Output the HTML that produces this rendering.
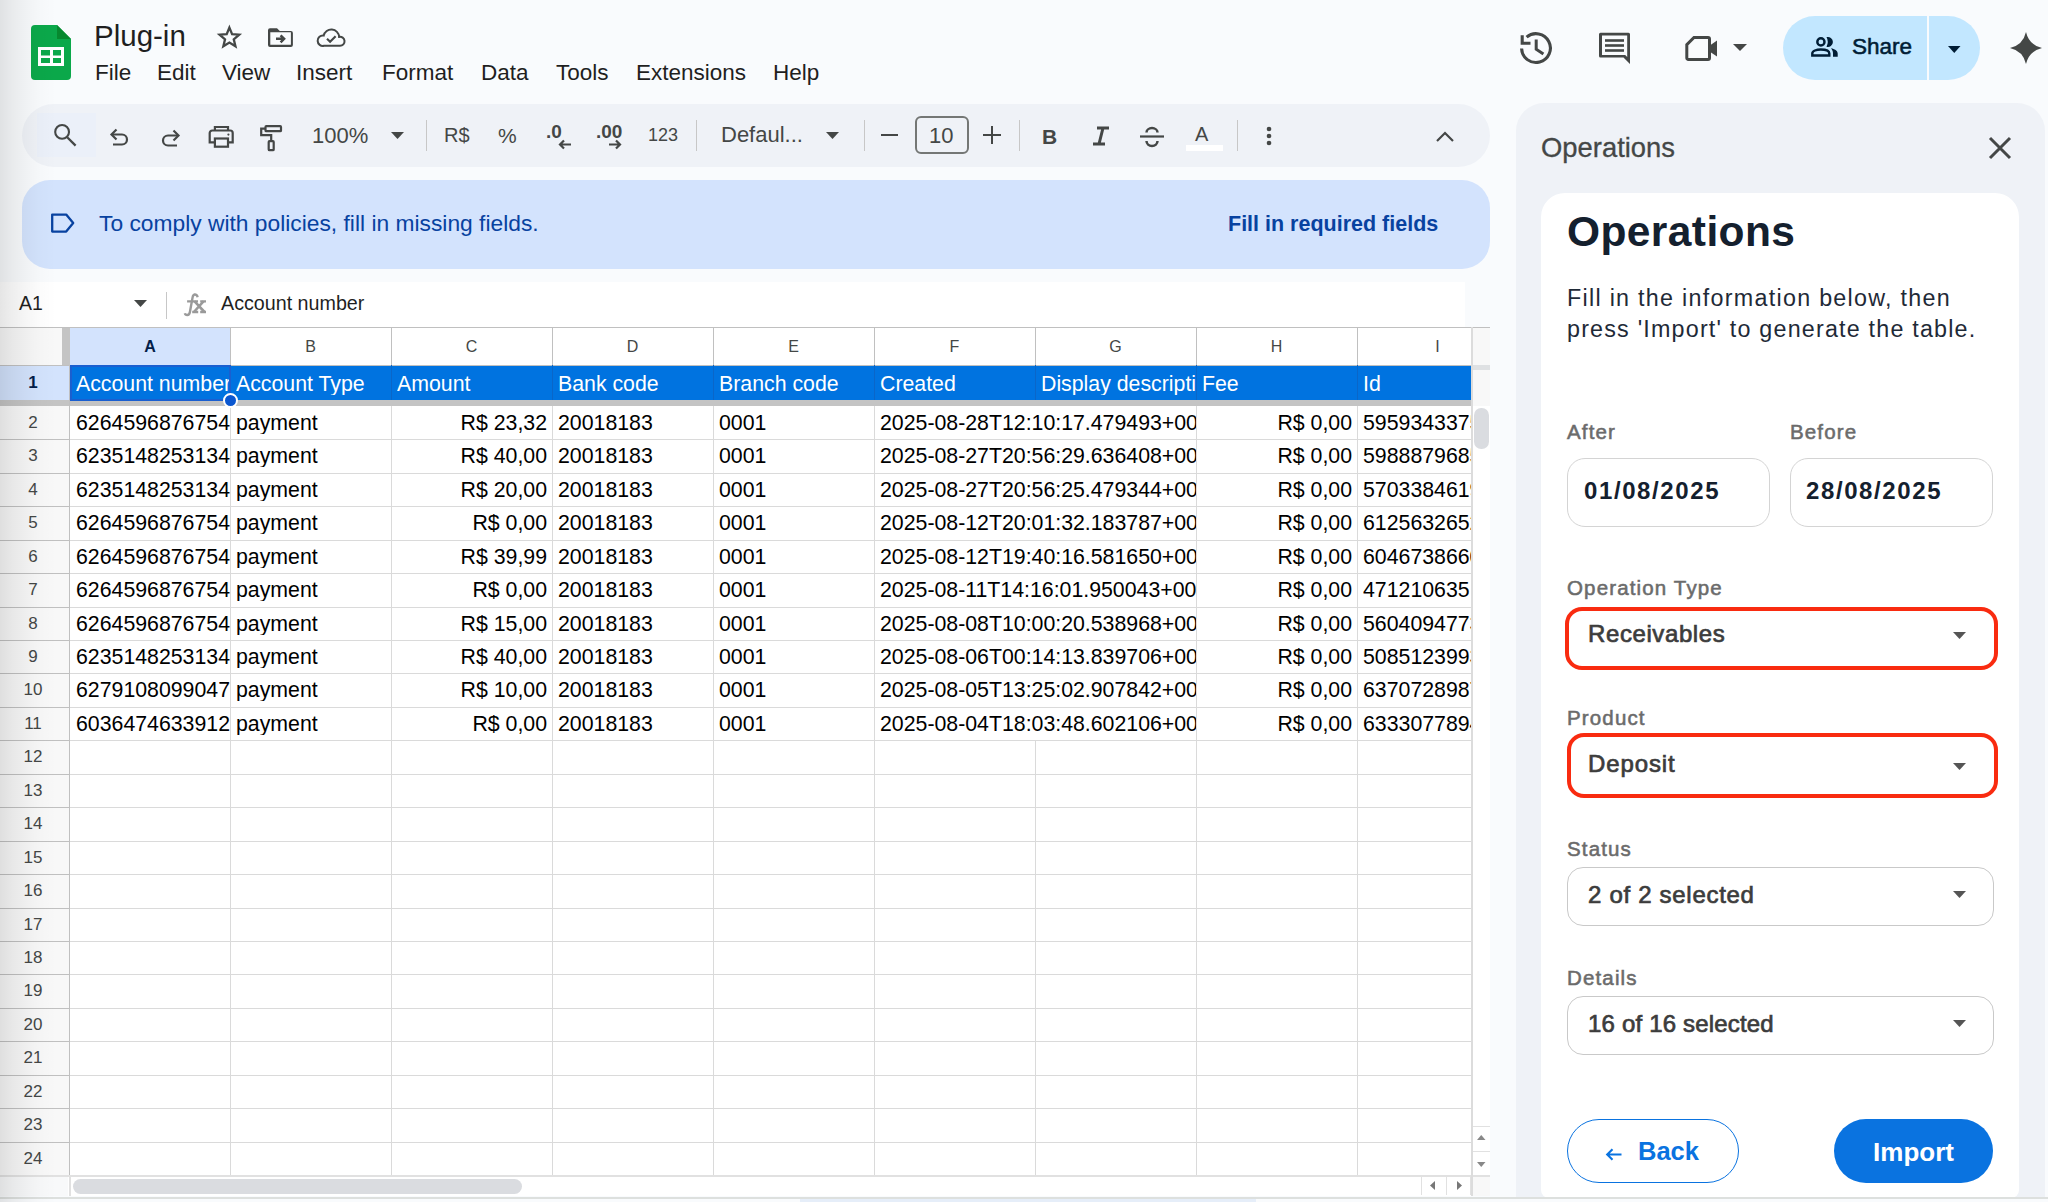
<!DOCTYPE html><html><head><meta charset="utf-8"><style>
*{box-sizing:border-box;margin:0;padding:0}
html,body{width:2048px;height:1202px;overflow:hidden;background:#f9fbfd;font-family:"Liberation Sans",sans-serif;position:relative}
.a{position:absolute}
.t{position:absolute;white-space:nowrap;line-height:1}
svg{position:absolute;overflow:visible}
</style></head><body>

<svg style="left:31px;top:25px" width="40" height="55" viewBox="0 0 40 55">
<path d="M4 0H26L40 14V51a4 4 0 0 1-4 4H4a4 4 0 0 1-4-4V4a4 4 0 0 1 4-4z" fill="#0ba84a"/>
<path d="M26 0L40 14H26z" fill="#07892f"/>
<rect x="7" y="22" width="26" height="19" fill="#fff"/>
<rect x="10" y="25" width="9" height="5.5" fill="#0ba84a"/><rect x="22" y="25" width="8" height="5.5" fill="#0ba84a"/>
<rect x="10" y="33" width="9" height="5" fill="#0ba84a"/><rect x="22" y="33" width="8" height="5" fill="#0ba84a"/>
</svg>
<div class="t" style="left:94px;top:21px;font-size:29.5px;color:#1f1f1f">Plug-in</div>
<svg style="left:217px;top:24px" width="25" height="25" viewBox="0 0 25 25"><path d="M12.40 3.60 L15.10 10.18 L22.20 10.72 L16.77 15.32 L18.45 22.23 L12.40 18.50 L6.35 22.23 L8.03 15.32 L2.60 10.72 L9.70 10.18z" fill="none" stroke="#444746" stroke-width="2.3" stroke-linejoin="miter" stroke-miterlimit="10"/></svg>
<svg style="left:267px;top:27px" width="27" height="21" viewBox="0 0 27 21"><path fill-rule="evenodd" d="M3 1.2h7l2.8 2.8h11.1a2 2 0 0 1 2 2V17.9a2 2 0 0 1-2 2H3a2 2 0 0 1-2-2V3.2a2 2 0 0 1 2-2zM3.3 5.3v12.4h20.6V5.3z" fill="#444746"/><path d="M9 11.8h7.5M13.6 8.3l3.5 3.5-3.5 3.5" fill="none" stroke="#444746" stroke-width="2.5"/></svg>
<svg style="left:316px;top:26px" width="31" height="22" viewBox="0 0 31 22"><path d="M7.7 9.6A7.8 7.8 0 0 1 23.1 10.9A4.5 4.5 0 1 1 24 19.8H8A5.2 5.2 0 1 1 7.7 9.6z" fill="none" stroke="#444746" stroke-width="2"/><path d="M11 12.7L14.1 15.8L19.6 10.2" fill="none" stroke="#444746" stroke-width="2.1"/></svg>
<div class="t" style="left:95px;top:62px;font-size:22.5px;color:#1f1f1f">File</div>
<div class="t" style="left:157px;top:62px;font-size:22.5px;color:#1f1f1f">Edit</div>
<div class="t" style="left:222px;top:62px;font-size:22.5px;color:#1f1f1f">View</div>
<div class="t" style="left:296px;top:62px;font-size:22.5px;color:#1f1f1f">Insert</div>
<div class="t" style="left:382px;top:62px;font-size:22.5px;color:#1f1f1f">Format</div>
<div class="t" style="left:481px;top:62px;font-size:22.5px;color:#1f1f1f">Data</div>
<div class="t" style="left:556px;top:62px;font-size:22.5px;color:#1f1f1f">Tools</div>
<div class="t" style="left:636px;top:62px;font-size:22.5px;color:#1f1f1f">Extensions</div>
<div class="t" style="left:773px;top:62px;font-size:22.5px;color:#1f1f1f">Help</div>
<svg style="left:1517.5px;top:29.8px" width="36" height="36" viewBox="0 0 36 36"><path d="M3.6 18.5A14.4 14.4 0 1 0 8.6 7.2" fill="none" stroke="#444746" stroke-width="3.1"/><path d="M4.2 5.2V13.3H12.5" fill="none" stroke="#444746" stroke-width="3.1"/><path d="M18.2 9.4V19.2L25.4 24" fill="none" stroke="#444746" stroke-width="3"/></svg>
<svg style="left:1597px;top:31px" width="36" height="36" viewBox="0 0 36 36"><path fill-rule="evenodd" d="M3.5 1.8h28a1.5 1.5 0 0 1 1.5 1.5V33L26.5 26.5H3.5A1.5 1.5 0 0 1 2 25V3.3a1.5 1.5 0 0 1 1.5-1.5zM5 4.6v19.3h23.2l2 2V4.6z" fill="#444746"/><rect x="8" y="8.2" width="19" height="2.6" fill="#444746"/><rect x="8" y="13.2" width="19" height="2.6" fill="#444746"/><rect x="8" y="18.2" width="19" height="2.6" fill="#444746"/></svg>
<svg style="left:1684px;top:35px" width="36" height="28" viewBox="0 0 36 28"><path d="M10 2.5H24a1.5 1.5 0 0 1 1.5 1.5V23a1.5 1.5 0 0 1-1.5 1.5H4.3a1.5 1.5 0 0 1-1.5-1.5V9.7z" fill="none" stroke="#444746" stroke-width="3"/><path d="M25.5 10.8L33 5.4V21.6L25.5 16.6z" fill="#444746"/></svg>
<svg style="left:1733px;top:44px" width="14" height="7" viewBox="0 0 14 7"><path d="M0 0h14L7 7z" fill="#444746"/></svg>
<div class="a" style="left:1783px;top:16px;width:197px;height:64px;border-radius:32px;background:#c2e7ff"></div>
<div class="a" style="left:1927px;top:16px;width:1.5px;height:64px;background:#f9fbfd"></div>
<svg style="left:1810px;top:36px" width="29" height="22" viewBox="0 0 29 22"><circle cx="10.9" cy="5.9" r="3.6" fill="none" stroke="#001d35" stroke-width="2.4"/><path d="M16.5 1.1A5 5 0 1 1 16.5 10.7A10.2 10.2 0 0 0 16.5 1.1z" fill="#001d35"/><path d="M2.3 19.5V17.5C2.3 14.8 6.5 13.5 10.8 13.5S19.3 14.8 19.3 17.5V19.5z" fill="none" stroke="#001d35" stroke-width="2.4"/><path d="M21 12.3C24.5 13 27.7 14.5 27.7 17.5V20.7H23V17.5C23 15.5 22.3 13.8 21 12.3z" fill="#001d35"/></svg>
<div class="t" style="left:1852px;top:36px;font-size:22.5px;color:#001d35;-webkit-text-stroke:0.55px #001d35">Share</div>
<svg style="left:1947.5px;top:46px" width="12.5" height="7" viewBox="0 0 12.5 7"><path d="M0 0h12.5L6.25 7z" fill="#001d35"/></svg>
<svg style="left:2009.5px;top:31.7px" width="32" height="32" viewBox="0 0 32 32"><path d="M16 0Q19 13 32 16Q19 19 16 32Q13 19 0 16Q13 13 16 0z" fill="#444746"/></svg>
<div class="a" style="left:22px;top:104px;width:1468px;height:63px;border-radius:32px;background:#eff2f7"></div>
<div class="a" style="left:37px;top:113px;width:59px;height:44px;background:#ebf0f9"></div>
<svg style="left:53px;top:123px" width="24" height="24" viewBox="0 0 24 24"><circle cx="9.1" cy="8.9" r="6.9" fill="none" stroke="#444746" stroke-width="2.1"/><path d="M14.2 14.2L22.6 22.6" stroke="#444746" stroke-width="2.3"/></svg>
<svg style="left:107px;top:126px" width="24" height="24" viewBox="0 0 24 24"><path d="M5 8.5h10a5 5 0 0 1 0 10H6" fill="none" stroke="#444746" stroke-width="2.2"/><path d="M9.5 3.5L4.5 8.5l5 5" fill="none" stroke="#444746" stroke-width="2.2"/></svg>
<svg style="left:158.5px;top:126.5px" width="24" height="24" viewBox="0 0 24 24"><path d="M19 8.5H9a5 5 0 0 0 0 10h9" fill="none" stroke="#444746" stroke-width="2.2"/><path d="M14.5 3.5l5 5-5 5" fill="none" stroke="#444746" stroke-width="2.2"/></svg>
<svg style="left:208px;top:123px" width="26" height="26" viewBox="0 0 26 26"><path d="M6.9 7.5V4H20V7.5" fill="none" stroke="#444746" stroke-width="2.2"/><path d="M6.5 19.4H1.7V10a2.5 2.5 0 0 1 2.5-2.5H22.2a2.5 2.5 0 0 1 2.5 2.5V19.4H20.4" fill="none" stroke="#444746" stroke-width="2.2"/><rect x="6.9" y="15.5" width="13.1" height="8.2" fill="none" stroke="#444746" stroke-width="2.2"/><circle cx="20.4" cy="11.6" r="1.1" fill="#444746"/></svg>
<svg style="left:259px;top:124.5px" width="24" height="28" viewBox="0 0 24 28"><rect x="6.5" y="1.2" width="15.5" height="5" rx="0.8" fill="none" stroke="#444746" stroke-width="2.2"/><path d="M6.5 3.7H2.2v6.5h10v5" fill="none" stroke="#444746" stroke-width="2.2"/><rect x="9.7" y="16.2" width="5" height="9" rx="0.8" fill="none" stroke="#444746" stroke-width="2.2"/></svg>
<div class="t" style="left:312px;top:125px;font-size:22px;color:#444746">100%</div>
<svg style="left:391px;top:132px" width="13" height="7" viewBox="0 0 13 7"><path d="M0 0h13L6.5 7z" fill="#444746"/></svg>
<div class="a" style="left:426px;top:120px;width:1px;height:31px;background:#c7c7c7"></div>
<div class="t" style="left:444px;top:125px;font-size:20px;color:#444746">R$</div>
<div class="t" style="left:498px;top:125px;font-size:21px;color:#444746">%</div>
<div class="t" style="left:546px;top:122px;font-size:19px;color:#444746;font-weight:bold">.0</div>
<svg style="left:558px;top:139px" width="14" height="11" viewBox="0 0 14 11"><path d="M13 5.5H2M6 1.5L2 5.5l4 4" fill="none" stroke="#444746" stroke-width="2.2"/></svg>
<div class="t" style="left:596px;top:122px;font-size:19px;color:#444746;font-weight:bold">.00</div>
<svg style="left:608px;top:139px" width="14" height="11" viewBox="0 0 14 11"><path d="M1 5.5h11M8 1.5l4 4-4 4" fill="none" stroke="#444746" stroke-width="2.2"/></svg>
<div class="t" style="left:648px;top:126px;font-size:18px;color:#444746">123</div>
<div class="a" style="left:696px;top:120px;width:1px;height:31px;background:#c7c7c7"></div>
<div class="t" style="left:721px;top:124px;font-size:22px;color:#444746">Defaul...</div>
<svg style="left:826px;top:132px" width="13" height="7" viewBox="0 0 13 7"><path d="M0 0h13L6.5 7z" fill="#444746"/></svg>
<div class="a" style="left:864px;top:120px;width:1px;height:31px;background:#c7c7c7"></div>
<div class="a" style="left:881px;top:134px;width:17px;height:2px;background:#444746"></div>
<div class="a" style="left:915px;top:116px;width:54px;height:38px;border:2px solid #747775;border-radius:6px"></div>
<div class="t" style="left:929px;top:125px;font-size:22px;color:#444746">10</div>
<div class="a" style="left:983px;top:134px;width:18px;height:2px;background:#444746"></div>
<div class="a" style="left:991px;top:126px;width:2px;height:18px;background:#444746"></div>
<div class="a" style="left:1019px;top:120px;width:1px;height:31px;background:#c7c7c7"></div>
<div class="t" style="left:1042px;top:126px;font-size:21px;color:#444746;font-weight:bold">B</div>
<svg style="left:1091px;top:126px" width="20" height="20" viewBox="0 0 20 20"><path d="M6 2h12M2 18h12M12 2L8 18" fill="none" stroke="#444746" stroke-width="3"/></svg>
<svg style="left:1139px;top:126px" width="26" height="22" viewBox="0 0 26 22"><path d="M1 10.5h24" stroke="#444746" stroke-width="2.2"/><path d="M7.5 6.5a5 4 0 0 1 11 0M7.5 15a5 4.5 0 0 0 11 0" fill="none" stroke="#444746" stroke-width="2.5"/></svg>
<div class="t" style="left:1195px;top:124px;font-size:20px;color:#444746">A</div>
<div class="a" style="left:1186px;top:145px;width:37px;height:6px;background:#fff"></div>
<div class="a" style="left:1237px;top:120px;width:1px;height:31px;background:#c7c7c7"></div>
<svg style="left:1265px;top:126px" width="8" height="20" viewBox="0 0 8 20"><circle cx="4" cy="3" r="2.3" fill="#444746"/><circle cx="4" cy="10" r="2.3" fill="#444746"/><circle cx="4" cy="17" r="2.3" fill="#444746"/></svg>
<svg style="left:1436px;top:131px" width="18" height="11" viewBox="0 0 18 11"><path d="M1 10l8-8 8 8" fill="none" stroke="#444746" stroke-width="2.2"/></svg>
<div class="a" style="left:22px;top:180px;width:1468px;height:89px;border-radius:28px;background:#d3e3fd"></div>
<svg style="left:50px;top:212px" width="26" height="24" viewBox="0 0 26 24"><path d="M2.2 2.6H16.2L23.2 11.1L16.2 19.6H2.2z" fill="none" stroke="#0842a0" stroke-width="2.3" stroke-linejoin="round"/></svg>
<div class="t" style="left:99px;top:212px;font-size:22.8px;color:#0842a0">To comply with policies, fill in missing fields.</div>
<div class="t" style="left:1228px;top:214px;font-size:21.5px;color:#0842a0;font-weight:bold">Fill in required fields</div>
<div class="a" style="left:0;top:282px;width:1465px;height:45px;background:#fff"></div>
<div class="t" style="left:19px;top:294px;font-size:19.5px;color:#1f1f1f">A1</div>
<svg style="left:134px;top:300px" width="13" height="7" viewBox="0 0 13 7"><path d="M0 0h13L6.5 7z" fill="#444746"/></svg>
<div class="a" style="left:166px;top:292px;width:1px;height:27px;background:#c7c7c7"></div>
<svg style="left:183px;top:293px" width="26" height="24" viewBox="0 0 26 24"><g fill="none" stroke="#9a9a9a" stroke-width="2.3"><path d="M4.1 8.4H15M17.2 8.4H23M9.2 19H15.2M17.2 19H23"/><path d="M14.6 4.2C14.3 2.2 12.8 1.3 11.6 1.5C10.4 1.7 9.9 2.8 9.6 4.4L6.9 19C6.6 20.8 5.6 22 4.3 22C3 22 2.1 21.2 1.9 20.2" stroke-width="2.4"/><path d="M11.6 8.4L21.5 19M20.5 8.4L10.9 19" stroke-width="2.6"/></g></svg>
<div class="t" style="left:221px;top:294px;font-size:19.7px;color:#1f1f1f">Account number</div>
<div class="a" style="left:0;top:327px;width:1471px;height:848px;background:#fff"></div>
<div class="a" style="left:0;top:327px;width:70px;height:848px;background:#f8f8f8"></div>
<div class="a" style="left:70px;top:327px;width:160px;height:38px;background:#d3e3fd"></div>
<div class="a" style="left:0;top:365px;width:70px;height:35px;background:#d3e3fd"></div>
<div class="a" style="left:70px;top:365px;width:1401px;height:35px;background:#0073e0"></div>
<div class="a" style="left:62px;top:327px;width:8px;height:38px;background:#c4c4c4"></div>
<div class="a" style="left:0;top:327px;width:1490px;height:1px;background:#c0c0c0"></div>
<div class="a" style="left:0;top:365px;width:1471px;height:1px;background:#c0c0c0"></div>
<div class="a" style="left:230px;top:327px;width:1px;height:38px;background:#c0c0c0"></div>
<div class="a" style="left:391px;top:327px;width:1px;height:38px;background:#c0c0c0"></div>
<div class="a" style="left:552px;top:327px;width:1px;height:38px;background:#c0c0c0"></div>
<div class="a" style="left:713px;top:327px;width:1px;height:38px;background:#c0c0c0"></div>
<div class="a" style="left:874px;top:327px;width:1px;height:38px;background:#c0c0c0"></div>
<div class="a" style="left:1035px;top:327px;width:1px;height:38px;background:#c0c0c0"></div>
<div class="a" style="left:1196px;top:327px;width:1px;height:38px;background:#c0c0c0"></div>
<div class="a" style="left:1357px;top:327px;width:1px;height:38px;background:#c0c0c0"></div>
<div class="a" style="left:1471px;top:327px;width:1px;height:38px;background:#c0c0c0"></div>
<div class="a" style="left:230px;top:365px;width:1px;height:35px;background:#0a66c8"></div>
<div class="a" style="left:391px;top:365px;width:1px;height:35px;background:#0a66c8"></div>
<div class="a" style="left:552px;top:365px;width:1px;height:35px;background:#0a66c8"></div>
<div class="a" style="left:713px;top:365px;width:1px;height:35px;background:#0a66c8"></div>
<div class="a" style="left:874px;top:365px;width:1px;height:35px;background:#0a66c8"></div>
<div class="a" style="left:1035px;top:365px;width:1px;height:35px;background:#0a66c8"></div>
<div class="a" style="left:1196px;top:365px;width:1px;height:35px;background:#0a66c8"></div>
<div class="a" style="left:1357px;top:365px;width:1px;height:35px;background:#0a66c8"></div>
<div class="t" style="left:70px;width:160px;text-align:center;top:339px;font-size:16px;color:#041e49;font-weight:bold">A</div>
<div class="t" style="left:230px;width:161px;text-align:center;top:339px;font-size:16px;color:#444746;font-weight:normal">B</div>
<div class="t" style="left:391px;width:161px;text-align:center;top:339px;font-size:16px;color:#444746;font-weight:normal">C</div>
<div class="t" style="left:552px;width:161px;text-align:center;top:339px;font-size:16px;color:#444746;font-weight:normal">D</div>
<div class="t" style="left:713px;width:161px;text-align:center;top:339px;font-size:16px;color:#444746;font-weight:normal">E</div>
<div class="t" style="left:874px;width:161px;text-align:center;top:339px;font-size:16px;color:#444746;font-weight:normal">F</div>
<div class="t" style="left:1035px;width:161px;text-align:center;top:339px;font-size:16px;color:#444746;font-weight:normal">G</div>
<div class="t" style="left:1196px;width:161px;text-align:center;top:339px;font-size:16px;color:#444746;font-weight:normal">H</div>
<div class="t" style="left:1357px;width:161px;text-align:center;top:339px;font-size:16px;color:#444746;font-weight:normal">I</div>
<div class="t" style="left:76px;top:374px;width:155px;overflow:hidden;font-size:21.3px;color:#fff">Account number</div>
<div class="t" style="left:236px;top:374px;width:156px;overflow:hidden;font-size:21.3px;color:#fff">Account Type</div>
<div class="t" style="left:397px;top:374px;width:156px;overflow:hidden;font-size:21.3px;color:#fff">Amount</div>
<div class="t" style="left:558px;top:374px;width:156px;overflow:hidden;font-size:21.3px;color:#fff">Bank code</div>
<div class="t" style="left:719px;top:374px;width:156px;overflow:hidden;font-size:21.3px;color:#fff">Branch code</div>
<div class="t" style="left:880px;top:374px;width:156px;overflow:hidden;font-size:21.3px;color:#fff">Created</div>
<div class="t" style="left:1041px;top:374px;width:156px;overflow:hidden;font-size:21.3px;color:#fff">Display descripti</div>
<div class="t" style="left:1202px;top:374px;width:156px;overflow:hidden;font-size:21.3px;color:#fff">Fee</div>
<div class="t" style="left:1363px;top:374px;width:109px;overflow:hidden;font-size:21.3px;color:#fff">Id</div>
<div class="t" style="left:0;width:66px;text-align:center;top:374px;font-size:17px;color:#041e49;font-weight:bold">1</div>
<div class="a" style="left:0;top:400px;width:1471px;height:6px;background:#c4c4c4"></div>
<div class="a" style="left:0;top:439px;width:70px;height:1px;background:#c0c0c0"></div>
<div class="a" style="left:70px;top:439px;width:1401px;height:1px;background:#dadada"></div>
<div class="t" style="left:0;width:66px;text-align:center;top:414px;font-size:17px;color:#444746">2</div>
<div class="a" style="left:0;top:473px;width:70px;height:1px;background:#c0c0c0"></div>
<div class="a" style="left:70px;top:473px;width:1401px;height:1px;background:#dadada"></div>
<div class="t" style="left:0;width:66px;text-align:center;top:447px;font-size:17px;color:#444746">3</div>
<div class="a" style="left:0;top:506px;width:70px;height:1px;background:#c0c0c0"></div>
<div class="a" style="left:70px;top:506px;width:1401px;height:1px;background:#dadada"></div>
<div class="t" style="left:0;width:66px;text-align:center;top:481px;font-size:17px;color:#444746">4</div>
<div class="a" style="left:0;top:540px;width:70px;height:1px;background:#c0c0c0"></div>
<div class="a" style="left:70px;top:540px;width:1401px;height:1px;background:#dadada"></div>
<div class="t" style="left:0;width:66px;text-align:center;top:514px;font-size:17px;color:#444746">5</div>
<div class="a" style="left:0;top:573px;width:70px;height:1px;background:#c0c0c0"></div>
<div class="a" style="left:70px;top:573px;width:1401px;height:1px;background:#dadada"></div>
<div class="t" style="left:0;width:66px;text-align:center;top:548px;font-size:17px;color:#444746">6</div>
<div class="a" style="left:0;top:607px;width:70px;height:1px;background:#c0c0c0"></div>
<div class="a" style="left:70px;top:607px;width:1401px;height:1px;background:#dadada"></div>
<div class="t" style="left:0;width:66px;text-align:center;top:581px;font-size:17px;color:#444746">7</div>
<div class="a" style="left:0;top:640px;width:70px;height:1px;background:#c0c0c0"></div>
<div class="a" style="left:70px;top:640px;width:1401px;height:1px;background:#dadada"></div>
<div class="t" style="left:0;width:66px;text-align:center;top:615px;font-size:17px;color:#444746">8</div>
<div class="a" style="left:0;top:673px;width:70px;height:1px;background:#c0c0c0"></div>
<div class="a" style="left:70px;top:673px;width:1401px;height:1px;background:#dadada"></div>
<div class="t" style="left:0;width:66px;text-align:center;top:648px;font-size:17px;color:#444746">9</div>
<div class="a" style="left:0;top:707px;width:70px;height:1px;background:#c0c0c0"></div>
<div class="a" style="left:70px;top:707px;width:1401px;height:1px;background:#dadada"></div>
<div class="t" style="left:0;width:66px;text-align:center;top:681px;font-size:17px;color:#444746">10</div>
<div class="a" style="left:0;top:740px;width:70px;height:1px;background:#c0c0c0"></div>
<div class="a" style="left:70px;top:740px;width:1401px;height:1px;background:#dadada"></div>
<div class="t" style="left:0;width:66px;text-align:center;top:715px;font-size:17px;color:#444746">11</div>
<div class="a" style="left:0;top:774px;width:70px;height:1px;background:#c0c0c0"></div>
<div class="a" style="left:70px;top:774px;width:1401px;height:1px;background:#dadada"></div>
<div class="t" style="left:0;width:66px;text-align:center;top:748px;font-size:17px;color:#444746">12</div>
<div class="a" style="left:0;top:807px;width:70px;height:1px;background:#c0c0c0"></div>
<div class="a" style="left:70px;top:807px;width:1401px;height:1px;background:#dadada"></div>
<div class="t" style="left:0;width:66px;text-align:center;top:782px;font-size:17px;color:#444746">13</div>
<div class="a" style="left:0;top:841px;width:70px;height:1px;background:#c0c0c0"></div>
<div class="a" style="left:70px;top:841px;width:1401px;height:1px;background:#dadada"></div>
<div class="t" style="left:0;width:66px;text-align:center;top:815px;font-size:17px;color:#444746">14</div>
<div class="a" style="left:0;top:874px;width:70px;height:1px;background:#c0c0c0"></div>
<div class="a" style="left:70px;top:874px;width:1401px;height:1px;background:#dadada"></div>
<div class="t" style="left:0;width:66px;text-align:center;top:849px;font-size:17px;color:#444746">15</div>
<div class="a" style="left:0;top:908px;width:70px;height:1px;background:#c0c0c0"></div>
<div class="a" style="left:70px;top:908px;width:1401px;height:1px;background:#dadada"></div>
<div class="t" style="left:0;width:66px;text-align:center;top:882px;font-size:17px;color:#444746">16</div>
<div class="a" style="left:0;top:941px;width:70px;height:1px;background:#c0c0c0"></div>
<div class="a" style="left:70px;top:941px;width:1401px;height:1px;background:#dadada"></div>
<div class="t" style="left:0;width:66px;text-align:center;top:916px;font-size:17px;color:#444746">17</div>
<div class="a" style="left:0;top:974px;width:70px;height:1px;background:#c0c0c0"></div>
<div class="a" style="left:70px;top:974px;width:1401px;height:1px;background:#dadada"></div>
<div class="t" style="left:0;width:66px;text-align:center;top:949px;font-size:17px;color:#444746">18</div>
<div class="a" style="left:0;top:1008px;width:70px;height:1px;background:#c0c0c0"></div>
<div class="a" style="left:70px;top:1008px;width:1401px;height:1px;background:#dadada"></div>
<div class="t" style="left:0;width:66px;text-align:center;top:982px;font-size:17px;color:#444746">19</div>
<div class="a" style="left:0;top:1041px;width:70px;height:1px;background:#c0c0c0"></div>
<div class="a" style="left:70px;top:1041px;width:1401px;height:1px;background:#dadada"></div>
<div class="t" style="left:0;width:66px;text-align:center;top:1016px;font-size:17px;color:#444746">20</div>
<div class="a" style="left:0;top:1075px;width:70px;height:1px;background:#c0c0c0"></div>
<div class="a" style="left:70px;top:1075px;width:1401px;height:1px;background:#dadada"></div>
<div class="t" style="left:0;width:66px;text-align:center;top:1049px;font-size:17px;color:#444746">21</div>
<div class="a" style="left:0;top:1108px;width:70px;height:1px;background:#c0c0c0"></div>
<div class="a" style="left:70px;top:1108px;width:1401px;height:1px;background:#dadada"></div>
<div class="t" style="left:0;width:66px;text-align:center;top:1083px;font-size:17px;color:#444746">22</div>
<div class="a" style="left:0;top:1142px;width:70px;height:1px;background:#c0c0c0"></div>
<div class="a" style="left:70px;top:1142px;width:1401px;height:1px;background:#dadada"></div>
<div class="t" style="left:0;width:66px;text-align:center;top:1116px;font-size:17px;color:#444746">23</div>
<div class="a" style="left:0;top:1175px;width:70px;height:1px;background:#c0c0c0"></div>
<div class="a" style="left:70px;top:1175px;width:1401px;height:1px;background:#dadada"></div>
<div class="t" style="left:0;width:66px;text-align:center;top:1150px;font-size:17px;color:#444746">24</div>
<div class="a" style="left:69px;top:365px;width:1px;height:810px;background:#c0c0c0"></div>
<div class="a" style="left:230px;top:406px;width:1px;height:769px;background:#dadada"></div>
<div class="a" style="left:391px;top:406px;width:1px;height:769px;background:#dadada"></div>
<div class="a" style="left:552px;top:406px;width:1px;height:769px;background:#dadada"></div>
<div class="a" style="left:713px;top:406px;width:1px;height:769px;background:#dadada"></div>
<div class="a" style="left:874px;top:406px;width:1px;height:769px;background:#dadada"></div>
<div class="a" style="left:1035px;top:740px;width:1px;height:435px;background:#dadada"></div>
<div class="a" style="left:1196px;top:406px;width:1px;height:769px;background:#dadada"></div>
<div class="a" style="left:1357px;top:406px;width:1px;height:769px;background:#dadada"></div>
<div class="a" style="left:1471px;top:406px;width:1px;height:769px;background:#dadada"></div>
<div class="t" style="left:76px;top:413px;width:154px;overflow:hidden;font-size:21.3px;color:#000">6264596876754</div>
<div class="t" style="left:236px;top:413px;width:155px;overflow:hidden;font-size:21.3px;color:#000">payment</div>
<div class="t" style="left:391px;top:413px;width:156px;text-align:right;font-size:21.3px;color:#000">R$ 23,32</div>
<div class="t" style="left:558px;top:413px;width:155px;overflow:hidden;font-size:21.3px;color:#000">20018183</div>
<div class="t" style="left:719px;top:413px;width:155px;overflow:hidden;font-size:21.3px;color:#000">0001</div>
<div class="t" style="left:880px;top:413px;width:316px;overflow:hidden;font-size:21.3px;color:#000">2025-08-28T12:10:17.479493+00:00</div>
<div class="t" style="left:1196px;top:413px;width:156px;text-align:right;font-size:21.3px;color:#000">R$ 0,00</div>
<div class="t" style="left:1363px;top:413px;width:108px;overflow:hidden;font-size:21.3px;color:#000">5959343375</div>
<div class="t" style="left:76px;top:446px;width:154px;overflow:hidden;font-size:21.3px;color:#000">6235148253134</div>
<div class="t" style="left:236px;top:446px;width:155px;overflow:hidden;font-size:21.3px;color:#000">payment</div>
<div class="t" style="left:391px;top:446px;width:156px;text-align:right;font-size:21.3px;color:#000">R$ 40,00</div>
<div class="t" style="left:558px;top:446px;width:155px;overflow:hidden;font-size:21.3px;color:#000">20018183</div>
<div class="t" style="left:719px;top:446px;width:155px;overflow:hidden;font-size:21.3px;color:#000">0001</div>
<div class="t" style="left:880px;top:446px;width:316px;overflow:hidden;font-size:21.3px;color:#000">2025-08-27T20:56:29.636408+00:00</div>
<div class="t" style="left:1196px;top:446px;width:156px;text-align:right;font-size:21.3px;color:#000">R$ 0,00</div>
<div class="t" style="left:1363px;top:446px;width:108px;overflow:hidden;font-size:21.3px;color:#000">5988879685</div>
<div class="t" style="left:76px;top:480px;width:154px;overflow:hidden;font-size:21.3px;color:#000">6235148253134</div>
<div class="t" style="left:236px;top:480px;width:155px;overflow:hidden;font-size:21.3px;color:#000">payment</div>
<div class="t" style="left:391px;top:480px;width:156px;text-align:right;font-size:21.3px;color:#000">R$ 20,00</div>
<div class="t" style="left:558px;top:480px;width:155px;overflow:hidden;font-size:21.3px;color:#000">20018183</div>
<div class="t" style="left:719px;top:480px;width:155px;overflow:hidden;font-size:21.3px;color:#000">0001</div>
<div class="t" style="left:880px;top:480px;width:316px;overflow:hidden;font-size:21.3px;color:#000">2025-08-27T20:56:25.479344+00:00</div>
<div class="t" style="left:1196px;top:480px;width:156px;text-align:right;font-size:21.3px;color:#000">R$ 0,00</div>
<div class="t" style="left:1363px;top:480px;width:108px;overflow:hidden;font-size:21.3px;color:#000">5703384619</div>
<div class="t" style="left:76px;top:513px;width:154px;overflow:hidden;font-size:21.3px;color:#000">6264596876754</div>
<div class="t" style="left:236px;top:513px;width:155px;overflow:hidden;font-size:21.3px;color:#000">payment</div>
<div class="t" style="left:391px;top:513px;width:156px;text-align:right;font-size:21.3px;color:#000">R$ 0,00</div>
<div class="t" style="left:558px;top:513px;width:155px;overflow:hidden;font-size:21.3px;color:#000">20018183</div>
<div class="t" style="left:719px;top:513px;width:155px;overflow:hidden;font-size:21.3px;color:#000">0001</div>
<div class="t" style="left:880px;top:513px;width:316px;overflow:hidden;font-size:21.3px;color:#000">2025-08-12T20:01:32.183787+00:00</div>
<div class="t" style="left:1196px;top:513px;width:156px;text-align:right;font-size:21.3px;color:#000">R$ 0,00</div>
<div class="t" style="left:1363px;top:513px;width:108px;overflow:hidden;font-size:21.3px;color:#000">6125632652</div>
<div class="t" style="left:76px;top:547px;width:154px;overflow:hidden;font-size:21.3px;color:#000">6264596876754</div>
<div class="t" style="left:236px;top:547px;width:155px;overflow:hidden;font-size:21.3px;color:#000">payment</div>
<div class="t" style="left:391px;top:547px;width:156px;text-align:right;font-size:21.3px;color:#000">R$ 39,99</div>
<div class="t" style="left:558px;top:547px;width:155px;overflow:hidden;font-size:21.3px;color:#000">20018183</div>
<div class="t" style="left:719px;top:547px;width:155px;overflow:hidden;font-size:21.3px;color:#000">0001</div>
<div class="t" style="left:880px;top:547px;width:316px;overflow:hidden;font-size:21.3px;color:#000">2025-08-12T19:40:16.581650+00:00</div>
<div class="t" style="left:1196px;top:547px;width:156px;text-align:right;font-size:21.3px;color:#000">R$ 0,00</div>
<div class="t" style="left:1363px;top:547px;width:108px;overflow:hidden;font-size:21.3px;color:#000">6046738660</div>
<div class="t" style="left:76px;top:580px;width:154px;overflow:hidden;font-size:21.3px;color:#000">6264596876754</div>
<div class="t" style="left:236px;top:580px;width:155px;overflow:hidden;font-size:21.3px;color:#000">payment</div>
<div class="t" style="left:391px;top:580px;width:156px;text-align:right;font-size:21.3px;color:#000">R$ 0,00</div>
<div class="t" style="left:558px;top:580px;width:155px;overflow:hidden;font-size:21.3px;color:#000">20018183</div>
<div class="t" style="left:719px;top:580px;width:155px;overflow:hidden;font-size:21.3px;color:#000">0001</div>
<div class="t" style="left:880px;top:580px;width:316px;overflow:hidden;font-size:21.3px;color:#000">2025-08-11T14:16:01.950043+00:00</div>
<div class="t" style="left:1196px;top:580px;width:156px;text-align:right;font-size:21.3px;color:#000">R$ 0,00</div>
<div class="t" style="left:1363px;top:580px;width:108px;overflow:hidden;font-size:21.3px;color:#000">471210635</div>
<div class="t" style="left:76px;top:614px;width:154px;overflow:hidden;font-size:21.3px;color:#000">6264596876754</div>
<div class="t" style="left:236px;top:614px;width:155px;overflow:hidden;font-size:21.3px;color:#000">payment</div>
<div class="t" style="left:391px;top:614px;width:156px;text-align:right;font-size:21.3px;color:#000">R$ 15,00</div>
<div class="t" style="left:558px;top:614px;width:155px;overflow:hidden;font-size:21.3px;color:#000">20018183</div>
<div class="t" style="left:719px;top:614px;width:155px;overflow:hidden;font-size:21.3px;color:#000">0001</div>
<div class="t" style="left:880px;top:614px;width:316px;overflow:hidden;font-size:21.3px;color:#000">2025-08-08T10:00:20.538968+00:00</div>
<div class="t" style="left:1196px;top:614px;width:156px;text-align:right;font-size:21.3px;color:#000">R$ 0,00</div>
<div class="t" style="left:1363px;top:614px;width:108px;overflow:hidden;font-size:21.3px;color:#000">5604094773</div>
<div class="t" style="left:76px;top:647px;width:154px;overflow:hidden;font-size:21.3px;color:#000">6235148253134</div>
<div class="t" style="left:236px;top:647px;width:155px;overflow:hidden;font-size:21.3px;color:#000">payment</div>
<div class="t" style="left:391px;top:647px;width:156px;text-align:right;font-size:21.3px;color:#000">R$ 40,00</div>
<div class="t" style="left:558px;top:647px;width:155px;overflow:hidden;font-size:21.3px;color:#000">20018183</div>
<div class="t" style="left:719px;top:647px;width:155px;overflow:hidden;font-size:21.3px;color:#000">0001</div>
<div class="t" style="left:880px;top:647px;width:316px;overflow:hidden;font-size:21.3px;color:#000">2025-08-06T00:14:13.839706+00:00</div>
<div class="t" style="left:1196px;top:647px;width:156px;text-align:right;font-size:21.3px;color:#000">R$ 0,00</div>
<div class="t" style="left:1363px;top:647px;width:108px;overflow:hidden;font-size:21.3px;color:#000">5085123993</div>
<div class="t" style="left:76px;top:680px;width:154px;overflow:hidden;font-size:21.3px;color:#000">6279108099047</div>
<div class="t" style="left:236px;top:680px;width:155px;overflow:hidden;font-size:21.3px;color:#000">payment</div>
<div class="t" style="left:391px;top:680px;width:156px;text-align:right;font-size:21.3px;color:#000">R$ 10,00</div>
<div class="t" style="left:558px;top:680px;width:155px;overflow:hidden;font-size:21.3px;color:#000">20018183</div>
<div class="t" style="left:719px;top:680px;width:155px;overflow:hidden;font-size:21.3px;color:#000">0001</div>
<div class="t" style="left:880px;top:680px;width:316px;overflow:hidden;font-size:21.3px;color:#000">2025-08-05T13:25:02.907842+00:00</div>
<div class="t" style="left:1196px;top:680px;width:156px;text-align:right;font-size:21.3px;color:#000">R$ 0,00</div>
<div class="t" style="left:1363px;top:680px;width:108px;overflow:hidden;font-size:21.3px;color:#000">6370728987</div>
<div class="t" style="left:76px;top:714px;width:154px;overflow:hidden;font-size:21.3px;color:#000">6036474633912</div>
<div class="t" style="left:236px;top:714px;width:155px;overflow:hidden;font-size:21.3px;color:#000">payment</div>
<div class="t" style="left:391px;top:714px;width:156px;text-align:right;font-size:21.3px;color:#000">R$ 0,00</div>
<div class="t" style="left:558px;top:714px;width:155px;overflow:hidden;font-size:21.3px;color:#000">20018183</div>
<div class="t" style="left:719px;top:714px;width:155px;overflow:hidden;font-size:21.3px;color:#000">0001</div>
<div class="t" style="left:880px;top:714px;width:316px;overflow:hidden;font-size:21.3px;color:#000">2025-08-04T18:03:48.602106+00:00</div>
<div class="t" style="left:1196px;top:714px;width:156px;text-align:right;font-size:21.3px;color:#000">R$ 0,00</div>
<div class="t" style="left:1363px;top:714px;width:108px;overflow:hidden;font-size:21.3px;color:#000">6333077894</div>
<div class="a" style="left:70px;top:365px;width:161px;height:36px;border:2px solid #1a5fd0"></div>
<div class="a" style="left:223px;top:393px;width:15px;height:15px;border-radius:50%;background:#0b57d0;border:2px solid #fff"></div>
<div class="a" style="left:1472px;top:327px;width:18px;height:848px;background:#fff"></div>
<div class="a" style="left:1471px;top:327px;width:19px;height:79px;background:#f8f8f8"></div>
<div class="a" style="left:1471px;top:365px;width:19px;height:5px;background:#dfe1e3"></div>
<div class="a" style="left:1471px;top:327px;width:19px;height:1px;background:#c0c0c0"></div>
<div class="a" style="left:1474px;top:408px;width:14.5px;height:41px;border-radius:7.25px;background:#dadce0"></div>
<div class="a" style="left:1471px;top:1126px;width:19px;height:1px;background:#e1e1e1"></div>
<div class="a" style="left:1471px;top:1151px;width:19px;height:1px;background:#e1e1e1"></div>
<svg style="left:1477px;top:1135px" width="8.5" height="5" viewBox="0 0 8.5 5"><path d="M0 5h8.5L4.25 0z" fill="#888"/></svg>
<svg style="left:1477px;top:1162px" width="8.5" height="5" viewBox="0 0 8.5 5"><path d="M0 0h8.5L4.25 5z" fill="#888"/></svg>
<div class="a" style="left:0;top:1175px;width:1490px;height:2px;background:#e1e1e1"></div>
<div class="a" style="left:0;top:1177px;width:1490px;height:19px;background:#fff"></div>
<div class="a" style="left:0;top:1177px;width:68px;height:19px;background:#f8f9fa"></div>
<div class="a" style="left:73px;top:1179px;width:449px;height:15px;border-radius:8px;background:#dadce0"></div>
<div class="a" style="left:1421px;top:1177px;width:1px;height:18px;background:#e1e1e1"></div>
<div class="a" style="left:1446px;top:1177px;width:1px;height:18px;background:#e1e1e1"></div>
<div class="a" style="left:1470px;top:1177px;width:1px;height:18px;background:#e1e1e1"></div>
<svg style="left:1430px;top:1181px" width="5" height="9" viewBox="0 0 5 9"><path d="M5 0v9L0 4.5z" fill="#777"/></svg>
<svg style="left:1457px;top:1181px" width="5" height="9" viewBox="0 0 5 9"><path d="M0 0v9L5 4.5z" fill="#777"/></svg>
<div class="a" style="left:1516px;top:103px;width:529px;height:1099px;border-radius:28px 28px 0 0;background:#eff2f7"></div>
<div class="t" style="left:1541px;top:134px;font-size:27.4px;color:#444746;-webkit-text-stroke:0.3px #444746">Operations</div>
<svg style="left:1988px;top:136px" width="24" height="24" viewBox="0 0 24 24"><path d="M2 2l20 20M22 2L2 22" stroke="#444746" stroke-width="3"/></svg>
<div class="a" style="left:1541px;top:193px;width:478px;height:1005px;border-radius:24px 24px 8px 8px;background:#fff"></div>
<div class="t" style="left:1567px;top:211px;font-size:42.5px;letter-spacing:0.4px;color:#14202e;font-weight:bold">Operations</div>
<div class="t" style="left:1567px;top:287px;font-size:23.3px;letter-spacing:1.28px;color:#1f2a37">Fill in the information below, then</div>
<div class="t" style="left:1567px;top:318px;font-size:23.3px;letter-spacing:1.2px;color:#1f2a37">press 'Import' to generate the table.</div>
<div class="t" style="left:1567px;top:422px;font-size:20.5px;letter-spacing:1.15px;color:#6b6b6b;-webkit-text-stroke:0.55px #6b6b6b">After</div>
<div class="t" style="left:1790px;top:422px;font-size:20.5px;letter-spacing:1.15px;color:#6b6b6b;-webkit-text-stroke:0.55px #6b6b6b">Before</div>
<div class="a" style="left:1567px;top:458px;width:203px;height:69px;border:1.6px solid #d4d4d4;border-radius:18px"></div>
<div class="a" style="left:1790px;top:458px;width:203px;height:69px;border:1.6px solid #d4d4d4;border-radius:18px"></div>
<div class="t" style="left:1584px;top:479px;font-size:24px;letter-spacing:1.6px;color:#14202e;font-weight:bold">01/08/2025</div>
<div class="t" style="left:1806px;top:479px;font-size:24px;letter-spacing:1.6px;color:#14202e;font-weight:bold">28/08/2025</div>
<div class="t" style="left:1567px;top:578px;font-size:20.5px;letter-spacing:1.15px;color:#6b6b6b;-webkit-text-stroke:0.55px #6b6b6b">Operation Type</div>
<div class="a" style="left:1565px;top:607px;width:432.5px;height:63px;border:4.2px solid #f92b10;border-radius:17px"></div>
<div class="t" style="left:1588px;top:622px;font-size:24px;letter-spacing:0.6000000000000001px;color:#3c3c3c;-webkit-text-stroke:0.7px #3c3c3c">Receivables</div>
<svg style="left:1953px;top:632px" width="13" height="7" viewBox="0 0 13 7"><path d="M0 0h13L6.5 7z" fill="#555"/></svg>
<div class="t" style="left:1567px;top:708px;font-size:20.5px;letter-spacing:1.15px;color:#6b6b6b;-webkit-text-stroke:0.55px #6b6b6b">Product</div>
<div class="a" style="left:1567px;top:733px;width:430.5px;height:65px;border:4.2px solid #f92b10;border-radius:17px"></div>
<div class="t" style="left:1588px;top:752px;font-size:24px;letter-spacing:0.9px;color:#3c3c3c;-webkit-text-stroke:0.7px #3c3c3c">Deposit</div>
<svg style="left:1953px;top:763px" width="13" height="7" viewBox="0 0 13 7"><path d="M0 0h13L6.5 7z" fill="#555"/></svg>
<div class="t" style="left:1567px;top:839px;font-size:20.5px;letter-spacing:1.15px;color:#6b6b6b;-webkit-text-stroke:0.55px #6b6b6b">Status</div>
<div class="a" style="left:1567px;top:867px;width:427px;height:59px;border:1.6px solid #c9c9c9;border-radius:16px"></div>
<div class="t" style="left:1588px;top:883px;font-size:24px;letter-spacing:0.7px;color:#3c3c3c;-webkit-text-stroke:0.7px #3c3c3c">2 of 2 selected</div>
<svg style="left:1953px;top:891px" width="13" height="7" viewBox="0 0 13 7"><path d="M0 0h13L6.5 7z" fill="#555"/></svg>
<div class="t" style="left:1567px;top:968px;font-size:20.5px;letter-spacing:1.15px;color:#6b6b6b;-webkit-text-stroke:0.55px #6b6b6b">Details</div>
<div class="a" style="left:1567px;top:996px;width:427px;height:59px;border:1.6px solid #c9c9c9;border-radius:16px"></div>
<div class="t" style="left:1588px;top:1012px;font-size:24px;letter-spacing:0.18000000000000005px;color:#3c3c3c;-webkit-text-stroke:0.7px #3c3c3c">16 of 16 selected</div>
<svg style="left:1953px;top:1020px" width="13" height="7" viewBox="0 0 13 7"><path d="M0 0h13L6.5 7z" fill="#555"/></svg>
<div class="a" style="left:1567px;top:1119px;width:172px;height:64px;border:1.6px solid #0a73e0;border-radius:32px"></div>
<svg style="left:1605px;top:1148px" width="17" height="13" viewBox="0 0 17 13"><path d="M16.5 6.5H2.2M7.5 1.2L2.2 6.5l5.3 5.3" fill="none" stroke="#0a73e0" stroke-width="2.1"/></svg>
<div class="t" style="left:1638px;top:1139px;font-size:25.5px;color:#0a73e0;font-weight:bold">Back</div>
<div class="a" style="left:1834px;top:1119px;width:159px;height:64px;border-radius:32px;background:#0a73e0"></div>
<div class="t" style="left:1834px;width:159px;text-align:center;top:1139px;font-size:26px;color:#fff;font-weight:bold">Import</div>
<div class="a" style="left:1471px;top:1177px;width:19px;height:19px;background:#f8f8f8"></div>
<div class="a" style="left:1471px;top:327px;width:1.5px;height:869px;background:#dcdcdc"></div>
<div class="a" style="left:69px;top:1177px;width:1.5px;height:19px;background:#e1e1e1"></div>
<div class="a" style="left:0;top:1197px;width:2048px;height:2px;background:#dde0de"></div>
<div class="a" style="left:0;top:1199px;width:2048px;height:3px;background:#f9fbfd"></div>
<div class="a" style="left:800px;top:1199px;width:456px;height:3px;background:#e6eef9"></div>
<div class="a" style="left:0;top:0;width:56px;height:1202px;background:linear-gradient(to right,rgba(0,0,0,0.1) 0px,rgba(0,0,0,0.068) 12px,rgba(0,0,0,0.038) 25px,rgba(0,0,0,0.016) 38px,rgba(0,0,0,0) 56px)"></div>
</body></html>
